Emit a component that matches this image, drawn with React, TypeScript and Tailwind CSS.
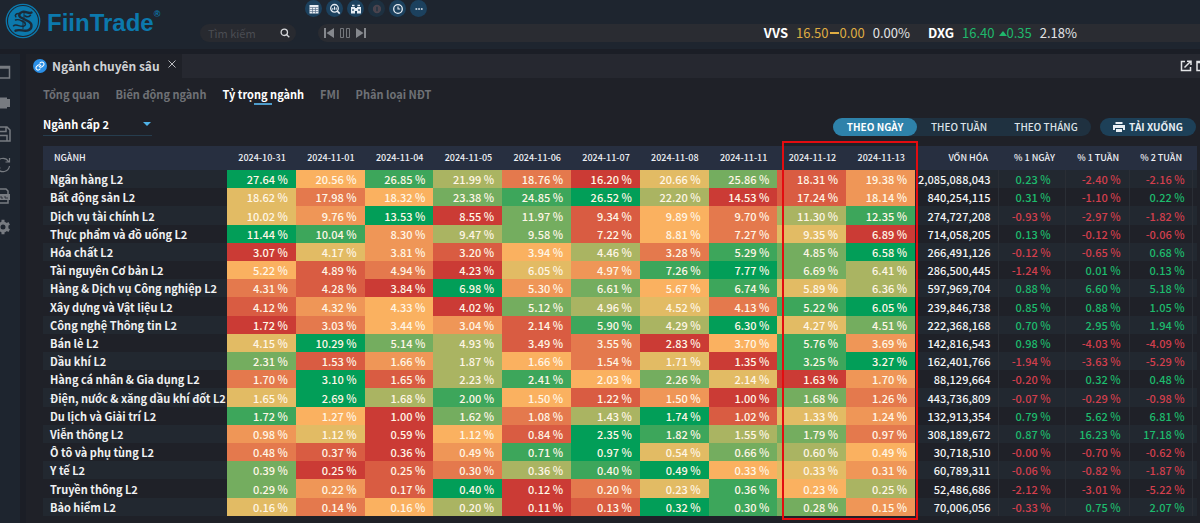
import type { ReactNode } from 'react'

const dates = [
  '2024-10-31', '2024-11-01', '2024-11-04', '2024-11-05', '2024-11-06',
  '2024-11-07', '2024-11-08', '2024-11-11', '2024-11-12', '2024-11-13',
]

type Sector = { name: string; share: number[]; cap: string; change: string[] }

const sectors: Sector[] = [
  { name: 'Ngân hàng L2', share: [27.64, 20.56, 26.85, 21.99, 18.76, 16.2, 20.66, 25.86, 18.31, 19.38], cap: '2,085,088,043', change: ['0.23', '-2.40', '-2.16'] },
  { name: 'Bất động sản L2', share: [18.62, 17.98, 18.32, 23.38, 24.85, 26.52, 22.2, 14.53, 17.24, 18.14], cap: '840,254,115', change: ['0.31', '-1.10', '0.22'] },
  { name: 'Dịch vụ tài chính L2', share: [10.02, 9.76, 13.53, 8.55, 11.97, 9.34, 9.89, 9.7, 11.3, 12.35], cap: '274,727,208', change: ['-0.93', '-2.97', '-1.82'] },
  { name: 'Thực phẩm và đồ uống L2', share: [11.44, 10.04, 8.3, 9.47, 9.58, 7.22, 8.81, 7.27, 9.35, 6.89], cap: '714,058,205', change: ['0.13', '-0.12', '-0.06'] },
  { name: 'Hóa chất L2', share: [3.07, 4.17, 3.81, 3.2, 3.94, 4.46, 3.28, 5.29, 4.85, 6.58], cap: '266,491,126', change: ['-0.12', '-0.65', '0.68'] },
  { name: 'Tài nguyên Cơ bản L2', share: [5.22, 4.89, 4.94, 4.23, 6.05, 4.97, 7.26, 7.77, 6.69, 6.41], cap: '286,500,445', change: ['-1.24', '0.01', '0.13'] },
  { name: 'Hàng & Dịch vụ Công nghiệp L2', share: [4.31, 4.28, 3.84, 6.98, 5.3, 6.61, 5.67, 6.74, 5.89, 6.36], cap: '597,969,704', change: ['0.88', '6.60', '5.18'] },
  { name: 'Xây dựng và Vật liệu L2', share: [4.12, 4.32, 4.33, 4.02, 5.12, 4.96, 4.52, 4.13, 5.22, 6.05], cap: '239,846,738', change: ['0.85', '0.88', '1.05'] },
  { name: 'Công nghệ Thông tin L2', share: [1.72, 3.03, 3.44, 3.04, 2.14, 5.9, 4.29, 6.3, 4.27, 4.51], cap: '222,368,168', change: ['0.70', '2.95', '1.94'] },
  { name: 'Bán lẻ L2', share: [4.15, 10.29, 5.14, 4.93, 3.49, 3.55, 2.83, 3.7, 5.76, 3.69], cap: '142,816,543', change: ['0.98', '-4.03', '-4.09'] },
  { name: 'Dầu khí L2', share: [2.31, 1.53, 1.66, 1.87, 1.66, 1.54, 1.71, 1.35, 3.25, 3.27], cap: '162,401,766', change: ['-1.94', '-3.63', '-5.29'] },
  { name: 'Hàng cá nhân & Gia dụng L2', share: [1.7, 3.1, 1.65, 2.23, 2.41, 2.03, 2.26, 2.14, 1.63, 1.7], cap: '88,129,664', change: ['-0.20', '0.32', '0.48'] },
  { name: 'Điện, nước & xăng dầu khí đốt L2', share: [1.65, 2.69, 1.68, 2.0, 1.503, 1.22, 1.501, 1.0, 1.68, 1.26], cap: '443,736,809', change: ['-0.07', '-0.29', '-0.98'] },
  { name: 'Du lịch và Giải trí L2', share: [1.72, 1.27, 1.0, 1.62, 1.08, 1.43, 1.74, 1.02, 1.33, 1.24], cap: '132,913,354', change: ['0.79', '5.62', '6.81'] },
  { name: 'Viễn thông L2', share: [0.98, 1.123, 0.59, 1.121, 0.84, 2.35, 1.82, 1.55, 1.79, 0.97], cap: '308,189,672', change: ['0.87', '16.23', '17.18'] },
  { name: 'Ô tô và phụ tùng L2', share: [0.48, 0.37, 0.36, 0.49, 0.71, 0.97, 0.54, 0.66, 0.6, 0.49], cap: '30,718,510', change: ['-0.00', '-0.70', '-0.62'] },
  { name: 'Y tế L2', share: [0.39, 0.25, 0.25, 0.3, 0.36, 0.4, 0.49, 0.33, 0.33, 0.31], cap: '60,789,311', change: ['-0.06', '-0.82', '-1.87'] },
  { name: 'Truyền thông L2', share: [0.29, 0.22, 0.17, 0.4, 0.12, 0.2, 0.233, 0.36, 0.231, 0.25], cap: '52,486,686', change: ['-2.12', '-3.01', '-5.22'] },
  { name: 'Bảo hiểm L2', share: [0.163, 0.14, 0.161, 0.2, 0.11, 0.13, 0.32, 0.3, 0.28, 0.15], cap: '70,006,056', change: ['-0.33', '0.75', '2.07'] },
]

// Lowest share of the row first, highest last.
const heat = [
  'bg-[#cb3b35]', 'bg-[#d95c42]', 'bg-[#e4794d]', 'bg-[#ef9657]', 'bg-[#fab160]',
  'bg-[#e2bb64]', 'bg-[#aab462]', 'bg-[#74ad5f]', 'bg-[#3da65b]', 'bg-[#029e58]',
]

function rankOf(row: number[], index: number) {
  return row.filter((v, i) => v < row[index] || (v === row[index] && i < index)).length
}

function Logo() {
  return (
    <svg viewBox="0 0 36 36" className="size-9" aria-hidden="true">
      <circle cx="18" cy="18" r="16.7" fill="none" stroke="#0c79ad" strokeWidth="1.3" />
      <circle cx="18" cy="18" r="15" fill="#0c79ad" />
      <g fill="none" stroke="#1b2a38" strokeLinecap="round" strokeLinejoin="round">
        <path d="M26.500 9.500c-3 1.800-5.500-1.600-9-.6-3.300 1-4.300 3.800-2 5.300l8.500 4.600c3.800 2.400 3 7.200-1 8.600-4.500 1.500-8-1.700-12.500.3" strokeWidth="2.400" />
        <path d="M14 10.500c-3-.2-4.500 1.700-3.200 3.300M10.500 17c3.500-1.600 6 1.300 9.500 2.400M8.500 22.800c3-2.400 6 1.400 10 .4 2.300-.6 2.500-2.300 1-3.400M20 12.800c1.700 1.400 4 1 5.500-.6" strokeWidth="1.500" />
        <path d="M19 9.500v5M18 17.500v8" strokeWidth="1" />
      </g>
    </svg>
  )
}

function ToolButton({ label, dim, children }: { label: string; dim?: boolean; children: ReactNode }) {
  return (
    <button aria-label={label} className={`flex size-[17px] items-center justify-center rounded-full ${dim ? 'bg-[#1d3040] text-[#4b444e]' : 'bg-[#1c415e] text-[#e6ecf3]'}`}>
      <svg viewBox="0 0 12 12" className="size-3" fill="none" stroke="currentColor" strokeWidth="1.3" aria-hidden="true">
        {children}
      </svg>
    </button>
  )
}

function Toolbar() {
  return (
    <div className="flex gap-1 pl-[105px]">
      <ToolButton label="Bảng giá">
        <path d="M1.500 2h9v8.500h-9z" fill="currentColor" stroke="none" />
        <path d="M1.500 4.500h9M1.500 6.500h9M1.500 8.500h9M4.500 4.500v6M7.500 4.500v6" stroke="#4a6480" strokeWidth=".6" />
      </ToolButton>
      <ToolButton label="Bộ lọc">
        <circle cx="5.500" cy="5.300" r="3.800" />
        <path d="M8.200 8l2.500 2.700" strokeWidth="1.700" />
        <path d="M3.800 6.800V5M5.500 6.800V3.500M7.200 6.800V4.500" strokeWidth="1" />
      </ToolButton>
      <ToolButton label="Theo dõi">
        <path d="M1 4h4v1h2V4h4v6.500H7V8H5v2.500H1z" fill="currentColor" stroke="none" />
        <path d="M2 2.500h2.500M7.500 2.500H10" strokeWidth="1.600" />
        <path d="M2.200 7h1.600M8.200 7h1.600" stroke="#1c415e" strokeWidth="1.500" />
      </ToolButton>
      <ToolButton label="Giao dịch" dim>
        <circle cx="6" cy="6" r="3.500" fill="currentColor" />
        <path d="M6 3.800v4.400" stroke="#1d3040" />
      </ToolButton>
      <ToolButton label="Lịch sử">
        <circle cx="6" cy="6" r="4.300" />
        <path d="M6 3.500V6h2.200" strokeWidth="1.100" />
      </ToolButton>
      <ToolButton label="Thêm">
        <path d="M2.500 6h1.700M5.200 6h1.700M7.900 6h1.700" strokeWidth="1.600" />
      </ToolButton>
    </div>
  )
}

function Player() {
  return (
    <div className="flex items-center gap-[6px]">
      <button aria-label="Trước">
        <svg viewBox="0 0 10 12" className="block h-3 w-[10px]" fill="#85888d"><path d="M0 1h2v10H0zM10 1v10L2.500 6z" /></svg>
      </button>
      <button aria-label="Tạm dừng">
        <svg viewBox="0 0 10 12" className="block h-3 w-[10px]" fill="none" stroke="#74777c"><path d="M.5 1.500h3v9h-3zM6.500 1.500h3v9h-3z" /></svg>
      </button>
      <button aria-label="Sau">
        <svg viewBox="0 0 10 12" className="block h-3 w-[10px]" fill="#85888d"><path d="M8 1h2v10H8zM0 1v10l7.500-5z" /></svg>
      </button>
    </div>
  )
}

function Header() {
  return (
    <header className="flex h-[49px] bg-[#1e252f]">
      <a href="#home" className="flex w-[200px] shrink-0 items-start gap-[6px] pt-[3px] pl-[5px] text-[#0c79ad]">
        <Logo />
        <span className="flex pt-[4px] font-['Liberation_Sans',sans-serif] text-2xl leading-8 font-bold">
          FiinTrade<sup className="top-0 pt-[3px] text-[9px] leading-none">®</sup>
        </span>
      </a>
      <div className="min-w-0 flex-1">
        <Toolbar />
        <div className="mt-[7px] flex gap-[22px]">
          <label className="flex h-[18px] w-24 items-center justify-between rounded-full bg-[#282a30] pr-[6px] pl-2">
            <input type="search" aria-label="Tìm kiếm" placeholder="Tìm kiếm" className="w-16 bg-transparent text-[11px] leading-4 outline-none placeholder:text-[#4b4d53]" />
            <svg viewBox="0 0 10 10" className="size-[10px]" fill="none" stroke="#d5d7da" strokeWidth="1.300" aria-hidden="true">
              <circle cx="4.300" cy="4.300" r="3.200" />
              <path d="M6.700 6.700l2.600 2.600" />
            </svg>
          </label>
          <div className="flex h-[18px] flex-1 items-center justify-between rounded-l-full bg-[#2a2c32] pr-[123px] pl-[6px]">
            <Player />
            <div className="flex items-center gap-[18px] text-[13px] leading-[18px] text-[#e3e4e6]">
              <div className="flex items-center gap-2">
                <b className="text-white">VVS</b>
                <span className="flex items-center gap-[2px] text-[#dfac42]">16.50
                  <span className="flex items-center"><i className="h-[2px] w-[9px] bg-[#dfac42]" />0.00</span>
                </span>
                <span>0.00%</span>
              </div>
              <div className="flex items-center gap-2">
                <b className="text-white">DXG</b>
                <span className="flex items-center gap-1 text-[#1fb86c]">16.40
                  <span className="flex items-center"><svg viewBox="0 0 8 5" className="h-[5px] w-2" fill="#1fb86c"><path d="M4 0l4 5H0z" /></svg>0.35</span>
                </span>
                <span>2.18%</span>
              </div>
            </div>
          </div>
        </div>
      </div>
    </header>
  )
}

function SideIcon({ label, children }: { label: string; children: ReactNode }) {
  return (
    <button aria-label={label} className="block">
      <svg viewBox="0 0 16 16" className="size-4" fill="none" stroke="#777b81" strokeWidth="1.500" aria-hidden="true">{children}</svg>
    </button>
  )
}

function Sidebar() {
  return (
    <nav className="flex w-[20px] shrink-0 flex-col items-end gap-[15px] overflow-hidden bg-[#1e252f] pt-[10px] pr-[9px]">
      <SideIcon label="Cửa sổ"><path d="M1 2.500h13.500v11.500H1z" /><path d="M1 3.500h13.500" strokeWidth="2.500" /></SideIcon>
      <SideIcon label="Video"><path d="M1 2.500h11v11H1zM12 4h3v8h-3z" fill="#777b81" stroke="none" /></SideIcon>
      <SideIcon label="Lưu"><path d="M1 1h11l3 3v11H1zM4 1v4.500h7V1M4 15V9.500h8V15" /></SideIcon>
      <SideIcon label="Làm mới"><path d="M1.500 7a6.500 6.500 0 0 1 12-2.500M14.500 9a6.500 6.500 0 0 1-12 2.500M14.500 1v4h-4M1.500 15v-4h4" strokeWidth="1.200" /></SideIcon>
      <SideIcon label="Tệp"><path d="M3 6V1h8l2 2v3M3 12v3h10v-3" /><path d="M0 6h15v6H0z" fill="#777b81" stroke="none" /><path d="M2 10V8h2v2M6 8v2h2M10 8v2h3" stroke="#1e252f" strokeWidth=".8" /></SideIcon>
      <SideIcon label="Cài đặt">
        <circle cx="8" cy="8" r="4" strokeWidth="3" />
        <path d="M8 .8v3M8 12.200v3M1.800 4.400l2.600 1.500M11.600 10.100l2.600 1.500M1.800 11.600l2.600-1.500M11.600 5.900l2.600-1.500" strokeWidth="3" />
      </SideIcon>
    </nav>
  )
}

function TabStrip() {
  return (
    <div className="flex h-6 bg-[#262830]">
      <div className="flex items-center bg-[#1f2128] pr-[6px] pl-[7px]">
        <span className="flex size-[14px] items-center justify-center rounded-full bg-[#2b8fe6]">
          <svg viewBox="0 0 24 24" className="size-[10px]" fill="none" stroke="white" strokeWidth="2.500" strokeLinecap="round" aria-hidden="true">
            <path d="M10 13a5 5 0 0 0 7.500.5l3-3a5 5 0 0 0-7-7l-1.700 1.700M14 11a5 5 0 0 0-7.500-.5l-3 3a5 5 0 0 0 7 7l1.700-1.700" />
          </svg>
        </span>
        <h1 className="ml-[5px] text-xs leading-5 font-bold text-[#d0d2d5]">Ngành chuyên sâu</h1>
        <button aria-label="Đóng" className="mb-1 ml-2">
          <svg viewBox="0 0 8 8" className="size-2" stroke="#b9bbbf" aria-hidden="true"><path d="M.5.5l7 7M7.500.5l-7 7" /></svg>
        </button>
      </div>
      <div className="flex flex-1 items-center justify-end gap-1 overflow-hidden">
        <button aria-label="Mở cửa sổ mới">
          <svg viewBox="0 0 12 12" className="block size-3" fill="none" stroke="#e3e4e6" strokeWidth="1.500" aria-hidden="true">
            <path d="M5 1.500H1.500v9h9V7M7 1.200h4V5M11 1L4.500 7.500" />
          </svg>
        </button>
        <button aria-label="Phóng to" className="-mr-2">
          <svg viewBox="0 0 12 12" className="block size-3" fill="none" stroke="#e3e4e6" strokeWidth="1.500" aria-hidden="true">
            <path d="M1 1.500h10v9H1zM1 2.500h10" />
          </svg>
        </button>
      </div>
    </div>
  )
}

const views = ['Tổng quan', 'Biến động ngành', 'Tỷ trọng ngành', 'FMI', 'Phân loại NĐT']

function ViewTabs() {
  return (
    <div className="flex gap-4 pt-[7px] text-[11px] leading-[18px] font-bold">
      {views.map((v) =>
        v === 'Tỷ trọng ngành' ? (
          <button key={v} className="flex flex-col items-center text-white">
            {v}
            <i className="h-[2px] w-[18px] bg-[#4e9ccb]" />
          </button>
        ) : (
          <button key={v} className="self-start text-[#6f7176]">{v}</button>
        ),
      )}
    </div>
  )
}

function Controls() {
  return (
    <div className="mt-2 flex items-end justify-between pr-1">
      <label className="relative flex w-[109px] items-center border-b border-[#263d4e]">
        <select aria-label="Cấp ngành" className="h-[22px] w-full appearance-none bg-transparent text-[11px] leading-[18px] font-bold text-white outline-none">
          <option>Ngành cấp 2</option>
        </select>
        <svg viewBox="0 0 8 4" className="pointer-events-none absolute right-[1px] h-1 w-2" fill="#4fb3e8" aria-hidden="true"><path d="M0 0h8L4 4z" /></svg>
      </label>
      <div className="flex gap-[9px] text-[10px] leading-[18px] font-medium text-[#dde3e8]">
        <div className="flex rounded-full bg-[#1f3140]">
          <button className="w-[84px] rounded-full bg-[#2e82aa] font-bold text-white">THEO NGÀY</button>
          <button className="w-[84px]">THEO TUẦN</button>
          <button className="w-[90px]">THEO THÁNG</button>
        </div>
        <button className="flex w-24 items-center justify-center gap-1 rounded-full bg-[#1d4058] font-bold text-[#e8eef3]">
          <svg viewBox="0 0 12 12" className="size-3" fill="currentColor" aria-hidden="true">
            <path d="M2.500 1h7v2h-7zM0 4h12v5h-2V7H2v2H0zM3 8h6v3H3z" />
          </svg>
          TẢI XUỐNG
        </button>
      </div>
    </div>
  )
}

function Change({ value, className }: { value: string; className: string }) {
  return (
    <td className={`border-l border-[#2a2e35] text-right ${className} ${value.startsWith('-') ? 'text-[#d23f4d]' : 'text-[#1dbb6d]'}`}>{value} %</td>
  )
}

function SectorTable() {
  return (
    <div className="relative mt-[10px] mr-[3px] mb-[7px]">
      <table className="h-[370px] w-full table-fixed border-collapse text-[11px] leading-4 font-medium whitespace-nowrap">
        <colgroup>
          <col className="w-[184px]" />
          {dates.map((d) => <col key={d} />)}
          <col className="w-[83px]" />
          <col className="w-[67px]" />
          <col className="w-[64px]" />
          <col className="w-[63px]" />
          <col className="w-[5px]" />
        </colgroup>
        <thead className="bg-[#272f40] text-[9px] text-[#eef0f4]">
          <tr className="h-6">
            <th scope="col" className="pl-[11px] text-left font-medium">NGÀNH</th>
            {dates.map((d) => <th key={d} scope="col" className="pr-[10px] text-right font-medium">{d}</th>)}
            <th scope="col" className="pr-[10px] text-right font-medium">VỐN HÓA</th>
            <th scope="col" className="pr-[10px] text-right font-medium">% 1 NGÀY</th>
            <th scope="col" className="pr-[10px] text-right font-medium">% 1 TUẦN</th>
            <th scope="col" className="pr-[10px] text-right font-medium">% 2 TUẦN</th>
            <td />
          </tr>
        </thead>
        <tbody>
          {sectors.map((s) => (
            <tr key={s.name} className="odd:bg-[#222830]">
              <th scope="row" className="pl-[7px] text-left font-bold text-[#f0f1f2]">{s.name}</th>
              {s.share.map((v, i) => (
                <td key={dates[i]} className={`pr-2 text-right text-[#fff6e6] ${heat[rankOf(s.share, i)]}`}>{v.toFixed(2)} %</td>
              ))}
              <td className="pr-[7px] text-right text-[#f4f5f5]">{s.cap}</td>
              <Change value={s.change[0]} className="pr-[14px]" />
              <Change value={s.change[1]} className="pr-2" />
              <Change value={s.change[2]} className="pr-[7px]" />
              <td className="border-l border-[#2a2e35]" />
            </tr>
          ))}
        </tbody>
      </table>
      <div className="pointer-events-none absolute -top-[5px] right-[279px] -bottom-1 w-[136px] border-2 border-[#e30c10]" />
    </div>
  )
}

export default function App() {
  return (
    <div className="flex min-h-screen flex-col bg-[#1b1e26] font-['Noto_Sans_CJK_SC',sans-serif]">
      <Header />
      <div className="mt-[5px] flex flex-1">
        <Sidebar />
        <main className="ml-[6px] min-w-0 flex-1 bg-[#1f2128]">
          <TabStrip />
          <div className="pl-[17px]">
            <ViewTabs />
            <Controls />
            <SectorTable />
          </div>
        </main>
      </div>
    </div>
  )
}
